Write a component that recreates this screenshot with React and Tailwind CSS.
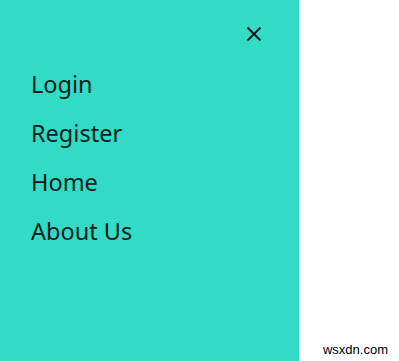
import React from "react";

export default function App() {
  const items = ["Login", "Register", "Home", "About Us"];
  return (
    <div className="flex h-[361px] w-[399px] bg-white" style={{ fontFamily: '"Noto Sans", "Open Sans", sans-serif' }}>
      <div className="flex h-full w-[299px] flex-col bg-[#31dbc5]">
        <div className="flex justify-end pr-[37px] pt-[26px]">
          <svg width="16" height="16" viewBox="0 0 16 16" className="text-[#111]">
            <path d="M1.5 1.5 L14.5 14.5 M14.5 1.5 L1.5 14.5" stroke="currentColor" strokeWidth="1.8" fill="none" />
          </svg>
        </div>
        <nav className="mt-[25px] flex flex-col gap-[15px] pl-[31px]">
          {items.map((t) => (
            <a key={t} className="text-[23.5px] leading-[34px] text-[#10201d]">{t}</a>
          ))}
        </nav>
      </div>
      <div className="flex flex-1 items-end justify-end pb-[3px] pr-[11px]">
        <span className="text-[13px] leading-[16px] text-black" style={{ fontFamily: '"Liberation Sans", sans-serif' }}>wsxdn.com</span>
      </div>
    </div>
  );
}
